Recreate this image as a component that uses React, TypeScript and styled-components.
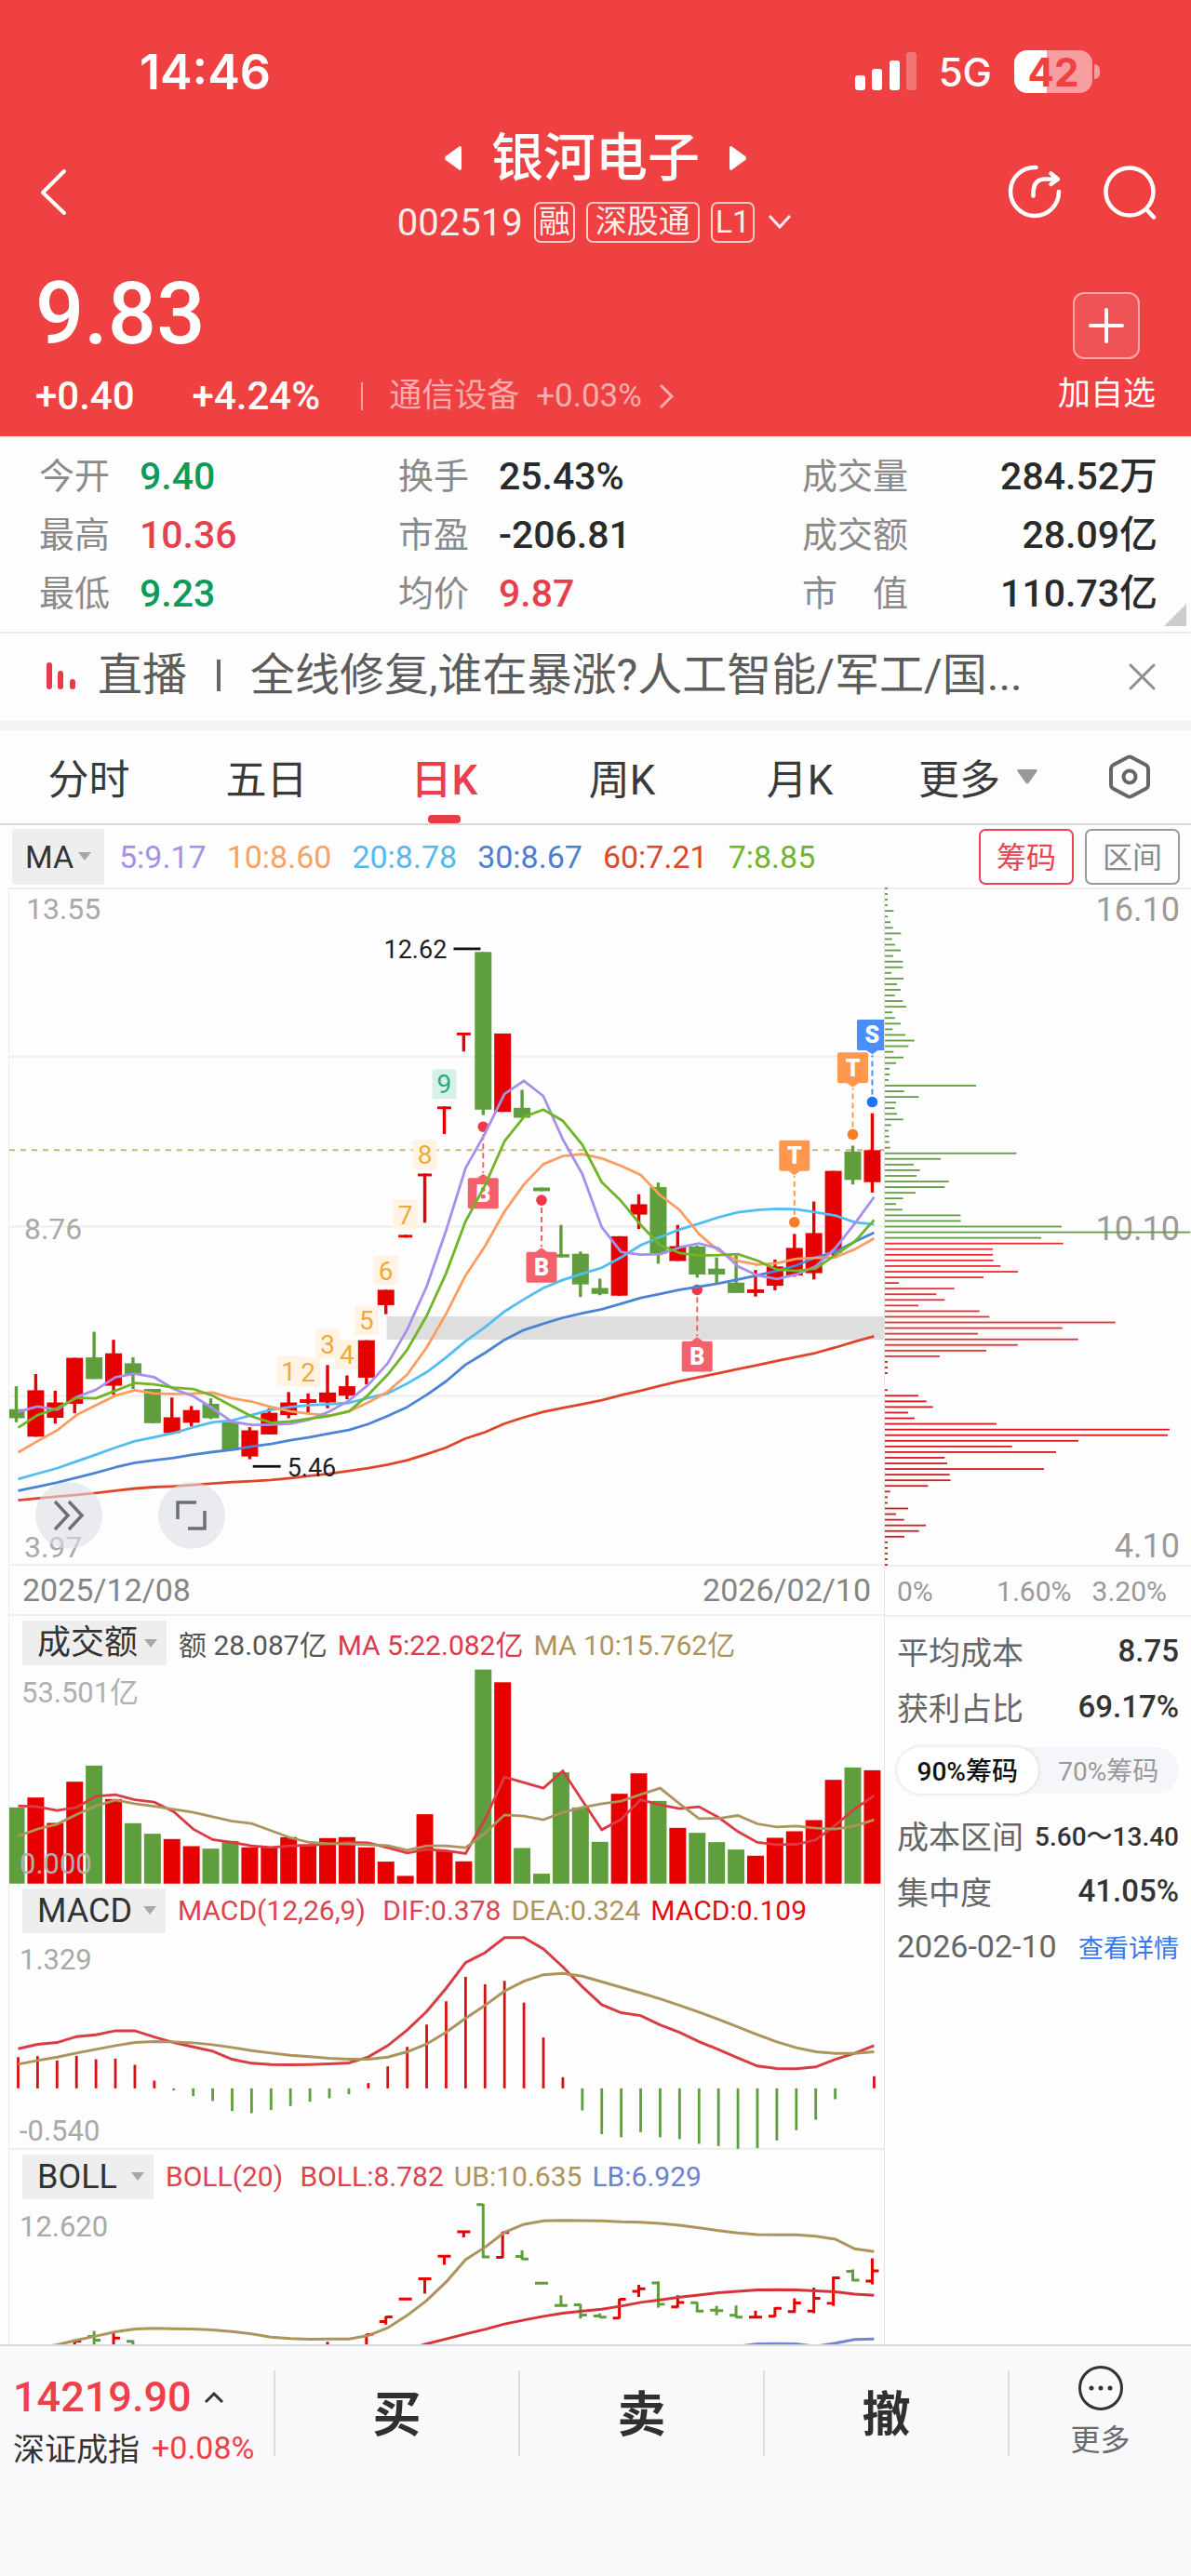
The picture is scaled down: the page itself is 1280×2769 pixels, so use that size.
import React, { useState } from "react";
import styled, { createGlobalStyle } from "styled-components";

const RED = "#e60000";
const GREEN = "#5f9e3c";

const GlobalStyle = createGlobalStyle`
  *, *::before, *::after { box-sizing: border-box; }
  body { margin: 0; background: #fdfdfd; }
  body, button, select {
    font-family: Roboto, "Noto Sans CJK SC", sans-serif;
  }
  button, select {
    margin: 0; padding: 0; border: 0; background: none; color: inherit; cursor: pointer;
  }
  svg { display: block; }
`;

const Page = styled.div`
  display: flex;
  flex-direction: column;
  min-height: 100vh;
  color: #222;
`;

/* ---------- header ---------- */

const Header = styled.header`
  background: #ef4042;
  color: #fff;
`;

const StatusBar = styled.div`
  display: flex;
  justify-content: space-between;
  align-items: center;
  height: 134px;
  padding: 20px 106px 0 150px;
  font-family: Inter, sans-serif;
`;

const Clock = styled.time`
  font-size: 52px;
  font-weight: 600;
`;

const StatusIcons = styled.div`
  display: flex;
  align-items: center;
  gap: 24px;
`;

const Network = styled.span`
  font-size: 42px;
  font-weight: 500;
`;

const Battery = styled.div`
  position: relative;
  display: flex;
  align-items: center;
  justify-content: center;
  width: 84px;
  height: 46px;
  border-radius: 14px;
  background: linear-gradient(to right, #fff 42%, #f79fa0 42%);
  color: #ef4042;
  font-size: 42px;
  font-weight: 700;
  &::after {
    content: "";
    position: absolute;
    left: 86px;
    top: 15px;
    width: 6px;
    height: 16px;
    border-radius: 0 6px 6px 0;
    background: #f79fa0;
  }
`;

const TitleBar = styled.div`
  display: grid;
  grid-template-columns: 1fr auto 1fr;
  align-items: center;
  height: 144px;
  padding: 0 36px;
`;

const IconButton = styled.button`
  display: grid;
  place-items: center;
`;

const BackButton = styled(IconButton)`
  justify-self: start;
`;

const TitleActions = styled.div`
  display: flex;
  justify-content: flex-end;
  gap: 42px;
`;

const TitleCenter = styled.div`
  padding-bottom: 6px;
`;

const TitleLine = styled.div`
  display: flex;
  align-items: center;
  justify-content: center;
  gap: 32px;
  height: 72px;
`;

const StockName = styled.h1`
  margin: 0;
  font-size: 56px;
  font-weight: 500;
  line-height: 72px;
`;

const CodeLine = styled.div`
  display: flex;
  align-items: center;
  justify-content: center;
  gap: 12px;
  height: 66px;
  font-size: 40px;
  opacity: 0.9;
`;

const Tag = styled.span`
  height: 44px;
  padding: 0 3px;
  border: 2px solid rgba(255, 255, 255, 0.8);
  border-radius: 7px;
  font-size: 34px;
  line-height: 38px;
`;

const WideTag = styled(Tag)`
  padding: 0 8px;
`;

const PriceBar = styled.div`
  display: flex;
  justify-content: space-between;
  height: 191px;
  padding: 4px 38px 11px;
`;

const Price = styled.div`
  font-size: 92px;
  font-weight: 500;
  line-height: 112px;
`;

const ChangeLine = styled.div`
  display: flex;
  align-items: center;
  font-size: 42px;
  font-weight: 500;
  line-height: 64px;
`;

const Change = styled.span`
  margin-right: 62px;
  & + & { margin-right: 44px; }
`;

const SectorLink = styled.a`
  display: flex;
  align-items: center;
  gap: 18px;
  color: rgba(255, 255, 255, 0.58);
  font-size: 35px;
  font-weight: 400;
  text-decoration: none;
  &::before {
    content: "";
    width: 2px;
    height: 30px;
    margin-right: 10px;
    background: rgba(255, 255, 255, 0.5);
  }
`;

const AddButton = styled.button`
  display: flex;
  flex-direction: column;
  align-items: center;
  gap: 14px;
  padding-top: 32px;
  font-size: 35px;
  line-height: 48px;
`;

const PlusBox = styled.span`
  display: grid;
  place-items: center;
  width: 72px;
  height: 72px;
  border: 2px solid rgba(255, 255, 255, 0.5);
  border-radius: 12px;
  background: rgba(255, 255, 255, 0.1);
`;

/* ---------- quote figures ---------- */

const Quotes = styled.section`
  position: relative;
  display: grid;
  grid-template-columns: 386fr 434fr 382fr;
  padding: 12px 36px 9px 42px;
  border-bottom: 2px solid #ececee;
`;

const QuoteList = styled.dl`
  margin: 0;
`;

const QuoteRow = styled.div<{ $spread?: boolean }>`
  display: flex;
  justify-content: ${(p) => (p.$spread ? "space-between" : "flex-start")};
  line-height: 63px;
`;

const QuoteName = styled.dt`
  min-width: 108px;
  color: #8a8a8a;
  font-size: 38px;
  white-space: pre;
`;

const QuoteValue = styled.dd<{ $color?: string }>`
  margin: 0;
  color: ${(p) => p.$color ?? "#2a2a2a"};
  font-size: 41px;
  font-weight: 500;
`;

const Corner = styled.i`
  position: absolute;
  right: 5px;
  bottom: 6px;
  border-left: 24px solid transparent;
  border-bottom: 24px solid #ccc;
`;

/* ---------- news ---------- */

const News = styled.section`
  display: flex;
  align-items: center;
  height: 104px;
  padding: 0 38px 0 48px;
  border-bottom: 10px solid #f3f4f6;
  color: #5c5c5c;
  font-size: 48px;
  line-height: 90px;
`;

const NewsBody = styled.div`
  display: flex;
  flex: 1;
  align-items: center;
  padding-bottom: 4px;
`;

const NewsDivider = styled.span`
  width: 4px;
  height: 34px;
  margin: 0 32px;
  background: #666;
`;

const NewsLink = styled.a`
  flex: 1;
  color: inherit;
  text-decoration: none;
  white-space: nowrap;
`;

/* ---------- period tabs ---------- */

const Tabs = styled.nav`
  display: grid;
  grid-template-columns: repeat(5, 191fr) 192fr 133fr;
  height: 102px;
  border-bottom: 2px solid #d8d8d8;
`;

const Tab = styled.button<{ $active?: boolean }>`
  position: relative;
  display: flex;
  align-items: center;
  justify-content: center;
  gap: 18px;
  color: ${(p) => (p.$active ? "#e9404e" : "#3a3a3a")};
  font-size: 44px;
  font-weight: ${(p) => (p.$active ? 500 : 400)};
  &::after {
    content: "";
    position: absolute;
    bottom: 0;
    width: 35px;
    height: 9px;
    border-radius: 4px;
    background: ${(p) => (p.$active ? "#e93a48" : "transparent")};
  }
`;

/* ---------- indicator line ---------- */

const Averages = styled.section`
  display: flex;
  align-items: center;
  gap: 22px;
  height: 67px;
  padding: 0 12px 0 13px;
  font-size: 34px;
`;

const PickerBox = styled.label<{ $compact?: boolean }>`
  position: relative;
  display: flex;
  align-items: center;
  height: ${(p) => (p.$compact ? "60px" : "48px")};
  margin-right: ${(p) => (p.$compact ? "-6px" : "2px")};
  background: #eeeeef;
  border-radius: 2px;
  color: #333;
  &::after {
    content: "";
    position: absolute;
    right: ${(p) => (p.$compact ? "14px" : "10px")};
    border: 7px solid transparent;
    border-top: 9px solid #a8a8a8;
    border-bottom: 0;
    pointer-events: none;
  }
`;

const PickerSelect = styled.select<{ $width: number; $compact?: boolean }>`
  appearance: none;
  width: ${(p) => p.$width}px;
  height: 100%;
  padding-left: ${(p) => (p.$compact ? 14 : 16)}px;
  font-size: ${(p) => (p.$compact ? 34 : 36)}px;
`;

const Tint = styled.span<{ $color: string }>`
  color: ${(p) => p.$color};
`;

const ModeButtons = styled.div`
  display: flex;
  gap: 12px;
  margin-left: auto;
`;

const ModeButton = styled.button<{ $active?: boolean }>`
  width: 102px;
  height: 60px;
  padding-bottom: 4px;
  border: 2px solid ${(p) => (p.$active ? "#ea4452" : "#9a9a9a")};
  border-radius: 7px;
  color: ${(p) => (p.$active ? "#ea4452" : "#8a8a8a")};
  font-size: 32px;
`;

/* ---------- chart area ---------- */

const ChartArea = styled.main`
  display: grid;
  grid-template-columns: 950fr 330fr;
`;

const ChartColumn = styled.div`
  margin-left: 9px;
  border-left: 1px solid #ebebeb;
`;

const ChartBox = styled.div`
  position: relative;
`;

const Plot = styled.svg`
  width: 100%;
  height: auto;
  font-family: Roboto, "Noto Sans CJK SC", sans-serif;
`;

const RoundButton = styled.button<{ $left: number }>`
  position: absolute;
  left: ${(p) => p.$left}px;
  bottom: 18px;
  display: grid;
  place-items: center;
  width: 72px;
  height: 72px;
  border-radius: 50%;
  background: rgba(220, 223, 228, 0.6);
`;

const AxisRow = styled.div`
  display: flex;
  justify-content: space-between;
  align-items: center;
  height: 54px;
  padding: 0 14px;
  border-bottom: 2px solid #efefef;
  color: #858585;
  font-size: 34px;
`;

const PercentRow = styled(AxisRow)`
  justify-content: flex-start;
  gap: 22px;
  padding: 0 26px 0 13px;
  color: #999;
  font-size: 30px;
  & > :first-child { margin-right: auto; }
`;

const PanelHead = styled.div`
  display: flex;
  align-items: center;
  gap: 11px;
  height: 53px;
  padding: 5px 0 0 14px;
  font-size: 30px;
  white-space: pre;
`;

const SideColumn = styled.aside`
  border-left: 1px solid #e4e4e4;
`;

const CostList = styled.div`
  padding: 6px 13px 0 13px;
`;

const CostRow = styled.div`
  display: flex;
  align-items: center;
  justify-content: space-between;
  height: 60px;
  color: #666;
  font-size: 34px;
  white-space: nowrap;
`;

const CostValue = styled.span<{ $small?: boolean }>`
  color: #333;
  font-size: ${(p) => (p.$small ? 28 : 33)}px;
  font-weight: 500;
`;

const DetailLink = styled.a`
  color: #3478f0;
  font-size: 27px;
  text-decoration: none;
`;

const Toggle = styled.div`
  display: grid;
  grid-template-columns: 1fr 1fr;
  height: 50px;
  margin: 14px 0;
  border-radius: 25px;
  background: #f5f6fa;
`;

const ToggleButton = styled.button<{ $active: boolean }>`
  padding-bottom: 2px;
  border-radius: 25px;
  background: ${(p) => (p.$active ? "#fff" : "transparent")};
  box-shadow: ${(p) => (p.$active ? "0 0 4px rgba(0, 0, 0, 0.16)" : "none")};
  color: ${(p) => (p.$active ? "#111" : "#999")};
  font-size: 28px;
  font-weight: ${(p) => (p.$active ? 500 : 400)};
`;

/* ---------- footer ---------- */

const Footer = styled.footer`
  display: grid;
  flex: 1;
  grid-template-columns: 294fr 263fr 263fr 263fr 197fr;
  align-items: start;
  min-height: 248px;
  padding-top: 26px;
  border-top: 2px solid #d9d9db;
  background: #f9f9fb;
`;

const IndexCell = styled.button`
  padding: 2px 0 0 14px;
  text-align: left;
  white-space: nowrap;
`;

const IndexLine = styled.div<{ $big?: boolean }>`
  display: flex;
  align-items: center;
  gap: 13px;
  height: 54px;
  color: ${(p) => (p.$big ? "#ee3f4b" : "#333")};
  font-size: ${(p) => (p.$big ? 45 : 34)}px;
  font-weight: ${(p) => (p.$big ? 500 : 400)};
`;

const TradeButton = styled.button`
  height: 92px;
  padding-bottom: 4px;
  border-left: 2px solid #dcdcde;
  color: #2f3032;
  font-size: 52px;
  font-weight: 700;
`;

const MoreButton = styled.button`
  display: flex;
  flex-direction: column;
  align-items: center;
  height: 92px;
  border-left: 2px solid #dcdcde;
  color: #6a6a6a;
  font-size: 32px;
  line-height: 62px;
  & > svg { flex: none; margin-top: -6px; }
`;

/* ---------- data ---------- */

// Bars are spaced evenly from the left edge of the plot.
const barX = (i: number) => 17.5 + 20.93 * i;

const UP = "r";
const toColor = (c: string) => (c === UP ? RED : GREEN);

// Price plot: level units run 30..1533 down the frame of 729 pixels.
const level = (v: number) => v / 2.063 - 14;

type Candle = [string, number, number, number, number];
// direction, high, body top, body bottom, low
const CANDLES: Candle[] = [
  ["g", 1136, 1187, 1207, 1216], ["r", 1109, 1145, 1248, 1248], ["r", 1146, 1172, 1206, 1219],
  ["r", 1073, 1073, 1175, 1196], ["g", 1015, 1072, 1120, 1120], ["r", 1033, 1063, 1135, 1155],
  ["g", 1072, 1085, 1109, 1142], ["g", 1142, 1142, 1218, 1218], ["r", 1161, 1205, 1240, 1240],
  ["r", 1180, 1189, 1217, 1225], ["g", 1163, 1175, 1207, 1209], ["g", 1216, 1216, 1278, 1280],
  ["r", 1227, 1234, 1292, 1298], ["r", 1185, 1195, 1243, 1243], ["r", 1149, 1172, 1200, 1207],
  ["r", 1152, 1165, 1173, 1194], ["r", 1089, 1150, 1172, 1185], ["r", 1112, 1136, 1157, 1165],
  ["r", 1034, 1034, 1117, 1132], ["r", 922, 922, 956, 976], ["r", 800, 800, 806, 806],
  ["r", 664, 664, 670, 773], ["r", 515, 515, 521, 576], ["r", 351, 351, 357, 393],
  ["g", 172, 172, 522, 534], ["r", 353, 353, 527, 527], ["g", 478, 518, 540, 540],
  ["g", 695, 695, 703, 703], ["g", 778, 843, 850, 850], ["g", 837, 842, 910, 938],
  ["g", 897, 918, 931, 934], ["r", 803, 803, 935, 935], ["r", 710, 732, 755, 787],
  ["g", 684, 694, 842, 864], ["r", 778, 825, 858, 858], ["g", 824, 826, 888, 895],
  ["g", 850, 875, 888, 911], ["g", 846, 906, 929, 929], ["r", 878, 921, 929, 937],
  ["r", 855, 870, 913, 923], ["r", 798, 829, 890, 893], ["r", 726, 796, 885, 899],
  ["r", 658, 658, 840, 850], ["g", 602, 615, 678, 688], ["r", 530, 612, 683, 706],
];

const MA_LINES: { color: string; values: number[] }[] = [
  { color: "#e0452c", values: [1389, 1385, 1381, 1377, 1373, 1368, 1363, 1360, 1358, 1355, 1352, 1349, 1347, 1344, 1340, 1335, 1330, 1324, 1318, 1310, 1300, 1287, 1272, 1252, 1238, 1219, 1205, 1193, 1184, 1176, 1167, 1156, 1146, 1135, 1125, 1116, 1107, 1098, 1089, 1080, 1071, 1062, 1050, 1037, 1025] },
  { color: "#4c83d6", values: [1368, 1359, 1350, 1339, 1328, 1316, 1306, 1300, 1295, 1288, 1282, 1277, 1270, 1264, 1256, 1249, 1241, 1233, 1220, 1202, 1182, 1155, 1125, 1088, 1062, 1033, 1011, 997, 984, 974, 965, 953, 940, 931, 922, 915, 908, 899, 890, 880, 868, 850, 838, 815, 795] },
  { color: "#52bdf0", values: [1342, 1330, 1318, 1303, 1288, 1272, 1258, 1249, 1240, 1227, 1216, 1212, 1200, 1188, 1182, 1178, 1176, 1173, 1162, 1152, 1130, 1105, 1072, 1036, 1005, 970, 943, 918, 900, 886, 873, 850, 823, 805, 788, 775, 761, 750, 745, 742, 743, 750, 757, 772, 777] },
  { color: "#fa9d60", values: [1283, 1258, 1234, 1200, 1178, 1157, 1145, 1152, 1153, 1152, 1150, 1163, 1170, 1182, 1192, 1197, 1201, 1192, 1172, 1148, 1110, 1050, 975, 890, 825, 748, 688, 643, 625, 621, 630, 647, 667, 712, 745, 798, 835, 858, 866, 863, 853, 851, 850, 832, 808] },
  { color: "#a790ea", values: [1193, 1181, 1188, 1160, 1144, 1116, 1108, 1116, 1142, 1158, 1185, 1215, 1222, 1221, 1219, 1210, 1192, 1168, 1133, 1085, 1010, 915, 790, 652, 575, 487, 458, 492, 588, 665, 783, 838, 844, 843, 828, 819, 830, 870, 890, 898, 888, 870, 830, 775, 716] },
  { color: "#6fb526", values: [1228, 1200, 1185, 1162, 1163, 1146, 1129, 1132, 1139, 1142, 1157, 1180, 1203, 1217, 1214, 1208, 1202, 1192, 1155, 1110, 1055, 980, 885, 770, 690, 592, 538, 522, 547, 600, 683, 725, 778, 823, 840, 846, 845, 843, 857, 877, 880, 875, 845, 815, 767] },
];

// step count, bar index, vertical centre
const STEPS: [string, number, number][] = [
  ["1", 14, 1102], ["2", 15, 1105], ["3", 16, 1042], ["4", 17, 1066], ["5", 18, 990],
  ["6", 19, 879], ["7", 20, 755], ["8", 21, 622], ["9", 22, 465],
];

type Trade = { kind: "B" | "T" | "S"; bar: number; flag: number; dot: number };
const TRADES: Trade[] = [
  { kind: "B", bar: 24, flag: 708, dot: 560 },
  { kind: "B", bar: 27, flag: 872, dot: 723 },
  { kind: "B", bar: 35, flag: 1070, dot: 922 },
  { kind: "T", bar: 40, flag: 624, dot: 772 },
  { kind: "T", bar: 43, flag: 429, dot: 577 },
  { kind: "S", bar: 44, flag: 356, dot: 505 },
];
const TRADE_COLORS = {
  B: ["#f5616b", "#ee3a48"],
  T: ["#ff984f", "#fb7c28"],
  S: ["#4b8ef9", "#1e74f8"],
};

const VOLUMES: [string, number][] = [
  ["g", 792], ["r", 760], ["r", 842], ["r", 709], ["g", 657], ["r", 765], ["g", 843], ["g", 877],
  ["r", 894], ["r", 917], ["g", 925], ["g", 900], ["r", 921], ["r", 920], ["r", 888], ["r", 912],
  ["r", 891], ["r", 888], ["r", 921], ["r", 967], ["r", 1013], ["r", 814], ["r", 932], ["r", 966],
  ["g", 347], ["r", 388], ["g", 923], ["g", 1006], ["g", 679], ["g", 792], ["g", 903], ["r", 748],
  ["r", 682], ["g", 771], ["r", 858], ["g", 874], ["g", 904], ["g", 928], ["r", 948], ["r", 890],
  ["r", 869], ["r", 833], ["r", 703], ["g", 663], ["r", 672],
];
const VOLUME_MA5 = [787, 790, 802, 792, 756, 751, 767, 775, 806, 862, 896, 905, 916, 921, 916, 914, 909, 905, 906, 922, 939, 927, 932, 941, 830, 694, 712, 730, 674, 770, 864, 830, 767, 784, 796, 790, 824, 870, 905, 912, 911, 897, 850, 797, 754];
const VOLUME_MA10 = [884, 862, 846, 815, 787, 768, 780, 788, 798, 808, 822, 836, 844, 867, 890, 905, 909, 910, 912, 915, 930, 916, 916, 922, 875, 816, 820, 832, 808, 792, 780, 772, 750, 730, 780, 828, 827, 818, 845, 855, 852, 859, 862, 852, 832];

const DIF = [550, 536, 530, 511, 505, 492, 492, 512, 530, 544, 558, 584, 597, 601, 602, 601, 599, 596, 577, 540, 490, 430, 355, 272, 240, 191, 191, 228, 286, 350, 408, 434, 443, 473, 497, 527, 553, 580, 606, 614, 615, 609, 584, 565, 540];
const DEA = [600, 588, 577, 564, 552, 540, 530, 527, 528, 531, 537, 546, 556, 564, 571, 576, 581, 584, 584, 577, 560, 535, 497, 452, 410, 364, 332, 311, 307, 316, 334, 352, 370, 389, 410, 432, 455, 480, 505, 528, 547, 560, 565, 565, 560];
const MACD_BARS = [577, 574, 588, 573, 584, 582, 602, 653, 685, 703, 719, 751, 758, 748, 735, 721, 710, 697, 661, 607, 544, 472, 397, 318, 342, 331, 401, 514, 642, 749, 826, 836, 819, 836, 842, 857, 864, 873, 871, 846, 813, 779, 713, 678, 639];

const BOLL_UPPER = [1530, 1515, 1505, 1490, 1477, 1463, 1454, 1452, 1453, 1454, 1457, 1462, 1470, 1480, 1485, 1487, 1486, 1486, 1475, 1450, 1410, 1362, 1302, 1230, 1190, 1142, 1116, 1105, 1103, 1104, 1105, 1108, 1109, 1113, 1119, 1127, 1136, 1144, 1149, 1150, 1150, 1154, 1164, 1195, 1204];
const BOLL_MIDDLE = [1520, 1502, 1486, 1470, 1455, 1438, 1425, 1413, 1403, 1396, 1390, 1380, 1368, 1360, 1351, 1344, 1337, 1332, 1328, 1327, 1328, 1331, 1334, 1341, 1345];
const BOLL_LOWER = [1510, 1502, 1501, 1502, 1510, 1500, 1488, 1486];
// bar index, direction, high, low, open, close
const BOLL_BARS: [number, string, number, number, number, number][] = [
  [3, "r", 1488, 1510, 1510, 1493], [4, "g", 1460, 1510, 1478, 1490], [5, "r", 1466, 1510, 1510, 1483],
  [6, "g", 1490, 1510, 1494, 1510], [16, "r", 1495, 1510, 1510, 1510], [18, "r", 1470, 1510, 1510, 1472],
  [19, "r", 1413, 1440, 1430, 1415], [20, "r", 1354, 1359, 1357, 1357], [21, "r", 1290, 1340, 1292, 1292],
  [22, "r", 1217, 1247, 1219, 1219], [23, "r", 1138, 1158, 1140, 1140], [24, "g", 1050, 1225, 1052, 1221],
  [25, "r", 1140, 1225, 1223, 1142], [26, "g", 1200, 1230, 1220, 1228], [27, "g", 1304, 1308, 1306, 1306],
  [28, "g", 1345, 1380, 1378, 1378], [29, "g", 1373, 1420, 1376, 1409], [30, "g", 1404, 1418, 1412, 1416],
  [31, "r", 1356, 1420, 1419, 1358], [32, "r", 1311, 1350, 1332, 1324], [33, "g", 1300, 1385, 1305, 1374],
  [34, "r", 1345, 1385, 1383, 1368], [35, "g", 1367, 1400, 1369, 1396], [36, "g", 1380, 1410, 1393, 1395],
  [37, "g", 1378, 1418, 1410, 1416], [38, "r", 1395, 1420, 1416, 1416], [39, "r", 1384, 1415, 1413, 1387],
  [40, "r", 1355, 1402, 1398, 1370], [41, "r", 1320, 1403, 1396, 1355], [42, "r", 1285, 1380, 1371, 1289],
  [43, "g", 1262, 1300, 1268, 1296], [44, "r", 1226, 1310, 1299, 1266],
];

// Chip distribution from the top price down, one entry per price step; 0 is an empty step.
const CHIPS = [
  9, 9, 9, 9, 28, 9, 18, 26, 52, 23, 33, 51, 27, 58, 58, 21, 60, 39, 51, 32, 58, 69, 24, 32, 51, 25,
  66, 95, 76, 28, 60, 36, 15, 16, 12, 294, 62, 109, 36, 32, 39, 59, 20, 12, 14, 14, 17, 424, 180, 93,
  113, 102, 206, 193, 99, 58, 36, 56, 244, 245, 570, 985, 504, 575, 348, 348, 350, 373, 429, 318, 45,
  224, 166, 193, 108, 305, 337, 743, 572, 300, 623, 428, 327, 177, 9, 9, 9, 0, 0, 9, 108, 134, 155, 75,
  96, 360, 918, 912, 624, 410, 552, 193, 201, 513, 209, 212, 139, 17, 9, 9, 75, 36, 62, 132, 110, 63,
  9, 9, 9, 9, 9,
];
const CHIPS_UP_FROM = 63;

const linePath = (values: number[], y: (v: number) => number, from = 0) =>
  values.map((v, i) => `${i ? "L" : "M"}${(barX(i + from) + 2).toFixed(1)} ${y(v).toFixed(1)}`).join("");

/* ---------- plots ---------- */

function TradeFlag({ kind, bar, flag, dot }: Trade) {
  const x = barX(bar);
  const y = level(flag);
  const d = level(dot);
  const side = flag > dot ? -1 : 1;
  const [fill, dotFill] = TRADE_COLORS[kind];
  return (
    <g>
      <line x1={x} x2={x} y1={d - side * 8} y2={y + side * 22} stroke={fill} strokeWidth={2} strokeDasharray="6 4" />
      <circle cx={x} cy={d} r={5.8} fill={dotFill} />
      <rect x={x - 16.5} y={y - 16.5} width={33} height={33} rx={2} fill={fill} />
      <path d={`M${x - 7} ${y + side * 16}L${x} ${y + side * 21}L${x + 7} ${y + side * 16}Z`} fill={fill} />
      <text x={x} y={y + 9} fontSize={25} fontWeight={900} fill="#fff" textAnchor="middle">{kind}</text>
    </g>
  );
}

function PricePlot() {
  return (
    <Plot viewBox="10 0 941 730" role="img" aria-label="日K">
      <g stroke="#ededed" strokeWidth={2}>
        {[1, 182, 365, 547, 729].map((y) => <line key={y} x1={10} x2={951} y1={y} y2={y} />)}
      </g>
      <rect x={416} y={level(981)} width={535} height={25} fill="#dedede" />
      <line x1={10} x2={951} y1={level(612)} y2={level(612)} stroke="#cbb277" strokeWidth={2} strokeDasharray="6 6" />
      <g fill="#a9a9a9" fontSize={32}>
        <text x={28} y={34}>13.55</text>
        <text x={26} y={378}>8.76</text>
        <text x={26} y={721}>3.97</text>
      </g>
      {STEPS.map(([label, bar, y]) => (
        <g key={label}>
          <rect x={barX(bar) - 13} y={level(y) - 16} width={26} height={32} rx={2} fill={label === "9" ? "#d6f2e8" : "#fff4e4"} />
          <text x={barX(bar)} y={level(y) + 10} fontSize={28} textAnchor="middle" fill={label === "9" ? "#27a97c" : "#f0a83a"}>
            {label}
          </text>
        </g>
      ))}
      {CANDLES.map(([dir, high, top, bottom, low], i) => {
        const half = i >= 20 && i <= 23 ? 7.5 : 9;
        return (
          <g key={i} fill={toColor(dir)}>
            <rect x={barX(i) - 1.7} y={level(high)} width={3.4} height={level(low) - level(high)} />
            <rect x={barX(i) - half} y={level(top)} width={half * 2} height={level(bottom) - level(top)} />
          </g>
        );
      })}
      {TRADES.map((t) => <TradeFlag key={t.bar} {...t} />)}
      {MA_LINES.map(({ color, values }) => (
        <path key={color} d={linePath(values, level)} fill="none" stroke={color} strokeWidth={2.8} strokeLinejoin="round" />
      ))}
      <g stroke="#111" strokeWidth={2.8}>
        <line x1={488} x2={517} y1={level(165)} y2={level(165)} />
        <line x1={272} x2={302} y1={level(1314)} y2={level(1314)} />
      </g>
      <g fill="#1c1c1c" fontSize={27}>
        <text x={413} y={76}>12.62</text>
        <text x={309} y={634}>5.46</text>
      </g>
    </Plot>
  );
}

function ChipPlot() {
  return (
    <Plot viewBox="951 0 329 730" role="img" aria-label="筹码">
      <line x1={951} x2={1280} y1={1} y2={1} stroke="#ededed" strokeWidth={2} />
      <line x1={951} x2={1280} y1={729} y2={729} stroke="#ededed" strokeWidth={2} />
      <g fill="#9b9b9b" fontSize={36} textAnchor="end">
        <text x={1268} y={36}>16.10</text>
        <text x={1268} y={379}>10.10</text>
        <text x={1268} y={720}>4.10</text>
      </g>
      {CHIPS.map((length, i) => (
        <rect
          key={i}
          x={951}
          y={i * 6.06}
          width={length / 3}
          height={1.8}
          fill={i < CHIPS_UP_FROM ? "#639b45" : i < 84 ? "#e92f36" : "#d31920"}
        />
      ))}
    </Plot>
  );
}

function VolumePlot() {
  const y = (v: number) => v / 3 - 111;
  return (
    <Plot viewBox="10 0 941 235" role="img" aria-label="成交额">
      {VOLUMES.map(([dir, v], i) => (
        <rect key={i} x={barX(i) - 9} y={y(v)} width={18} height={235 - y(v)} fill={toColor(dir)} />
      ))}
      <path d={linePath(VOLUME_MA5, y)} fill="none" stroke="#dc3a45" strokeWidth={2.8} />
      <path d={linePath(VOLUME_MA10, y)} fill="none" stroke="#ad945c" strokeWidth={2.8} />
      <g fill="#b0b0b0" fontSize={31}>
        <text x={23} y={40}>53.501亿</text>
        <text x={21} y={224}>0.000</text>
      </g>
    </Plot>
  );
}

function MacdPlot() {
  const y = (v: number) => v / 3 - 59;
  return (
    <Plot viewBox="10 0 941 233" role="img" aria-label="MACD">
      <line x1={10} x2={951} y1={232} y2={232} stroke="#ededed" strokeWidth={2} />
      {MACD_BARS.map((v, i) => (
        <line key={i} x1={barX(i) + 2} x2={barX(i) + 2} y1={y(678)} y2={y(v)} stroke={v < 678 ? "#d60f12" : GREEN} strokeWidth={2.8} />
      ))}
      <path d={linePath(DIF, y)} fill="none" stroke="#d83d46" strokeWidth={3} />
      <path d={linePath(DEA, y)} fill="none" stroke="#ad945c" strokeWidth={3} />
      <g fill="#a9a9a9" fontSize={31}>
        <text x={21} y={39}>1.329</text>
        <text x={21} y={223}>-0.540</text>
      </g>
    </Plot>
  );
}

function BollPlot() {
  const y = (v: number) => v / 3 - 345;
  return (
    <Plot viewBox="10 0 941 156" role="img" aria-label="BOLL">
      {BOLL_BARS.map(([i, dir, high, low, open, close]) => (
        <path
          key={i}
          d={`M${barX(i)} ${y(high)}V${y(low)}M${barX(i) - 7} ${y(open)}H${barX(i)}M${barX(i)} ${y(close)}H${barX(i) + 7}`}
          stroke={toColor(dir)}
          strokeWidth={3}
        />
      ))}
      <path d={linePath(BOLL_UPPER, y)} fill="none" stroke="#ad945c" strokeWidth={3} />
      <path d={linePath(BOLL_MIDDLE, y, 20)} fill="none" stroke="#d6333d" strokeWidth={3} />
      <path d={linePath(BOLL_LOWER, y, 37)} fill="none" stroke="#6f86d6" strokeWidth={3} />
      <text x={21} y={40} fill="#a9a9a9" fontSize={31}>12.620</text>
    </Plot>
  );
}

/* ---------- parts ---------- */

function Picker({ label, options, width, compact }: { label: string; options: string[]; width: number; compact?: boolean }) {
  return (
    <PickerBox $compact={compact}>
      <PickerSelect $width={width} $compact={compact} aria-label={label}>
        {options.map((o) => <option key={o}>{o}</option>)}
      </PickerSelect>
    </PickerBox>
  );
}

function Quote({ rows, spread }: { rows: [string, string, string?][]; spread?: boolean }) {
  return (
    <QuoteList>
      {rows.map(([name, value, color]) => (
        <QuoteRow key={name} $spread={spread}>
          <QuoteName>{name}</QuoteName>
          <QuoteValue $color={color}>{value}</QuoteValue>
        </QuoteRow>
      ))}
    </QuoteList>
  );
}

const QUOTE_GREEN = "#0e9a59";
const QUOTE_RED = "#e83f4c";
const PERIODS = ["分时", "五日", "日K", "周K", "月K"];

export default function App() {
  const [period, setPeriod] = useState("日K");
  const [share, setShare] = useState("90%筹码");

  return (
    <Page>
      <GlobalStyle />
      <Header>
        <StatusBar>
          <Clock>14:46</Clock>
          <StatusIcons>
            <svg width="66" height="42" viewBox="0 0 66 42" fill="#fff">
              <rect x="0" y="25" width="11" height="16" rx="3" />
              <rect x="18" y="18" width="11" height="23" rx="3" />
              <rect x="37" y="9" width="11" height="32" rx="3" />
              <rect x="55" y="0" width="11" height="41" rx="3" opacity="0.28" />
            </svg>
            <Network>5G</Network>
            <Battery>42</Battery>
          </StatusIcons>
        </StatusBar>

        <TitleBar>
          <BackButton aria-label="返回">
            <svg width="44" height="56" viewBox="0 0 44 56" fill="none" stroke="#fff" strokeWidth="4" strokeLinecap="round" strokeLinejoin="round">
              <path d="M33 6L10 29L33 51" />
            </svg>
          </BackButton>
          <TitleCenter>
            <TitleLine>
              <IconButton aria-label="上一只">
                <svg width="18" height="28" viewBox="0 0 18 28" fill="#fff"><path d="M16 1Q18 1 18 3V25Q18 27 16 27L1 16Q-1 14 1 12Z" /></svg>
              </IconButton>
              <StockName>银河电子</StockName>
              <IconButton aria-label="下一只">
                <svg width="18" height="28" viewBox="0 0 18 28" fill="#fff"><path d="M2 1Q0 1 0 3V25Q0 27 2 27L17 16Q19 14 17 12Z" /></svg>
              </IconButton>
            </TitleLine>
            <CodeLine>
              <span>002519</span>
              <Tag>融</Tag>
              <WideTag>深股通</WideTag>
              <Tag>L1</Tag>
              <IconButton aria-label="展开">
                <svg width="30" height="20" viewBox="0 0 30 20" fill="none" stroke="#fff" strokeWidth="3"><path d="M4 3L15 15L26 3" /></svg>
              </IconButton>
            </CodeLine>
          </TitleCenter>
          <TitleActions>
            <IconButton aria-label="分享">
              <svg width="60" height="60" viewBox="0 0 60 60" fill="none" stroke="#fff" strokeWidth="4.5" strokeLinecap="round" strokeLinejoin="round">
                <path d="M31.5 4A26 26 0 1 0 56 30" />
                <path d="M28.5 34.5V30Q29 17 41 16.5H53M47.5 10.5L55 16.5L47.5 22" />
              </svg>
            </IconButton>
            <IconButton aria-label="搜索">
              <svg width="60" height="60" viewBox="0 0 60 60" fill="none" stroke="#fff" strokeWidth="4.5" strokeLinecap="round">
                <circle cx="30" cy="30" r="25.5" />
                <path d="M48 49L56 57.5" />
              </svg>
            </IconButton>
          </TitleActions>
        </TitleBar>

        <PriceBar>
          <div>
            <Price>9.83</Price>
            <ChangeLine>
              <Change>+0.40</Change>
              <Change>+4.24%</Change>
              <SectorLink href="#sector">
                <span>通信设备</span>
                <span>+0.03%</span>
                <svg width="16" height="28" viewBox="0 0 16 28" fill="none" stroke="currentColor" strokeWidth="3"><path d="M2 2L14 14L2 26" /></svg>
              </SectorLink>
            </ChangeLine>
          </div>
          <AddButton>
            <PlusBox>
              <svg width="38" height="38" viewBox="0 0 38 38" stroke="#fff" strokeWidth="4" strokeLinecap="round"><path d="M19 2V36M2 19H36" /></svg>
            </PlusBox>
            加自选
          </AddButton>
        </PriceBar>
      </Header>

      <Quotes>
        <Quote rows={[["今开", "9.40", QUOTE_GREEN], ["最高", "10.36", QUOTE_RED], ["最低", "9.23", QUOTE_GREEN]]} />
        <Quote rows={[["换手", "25.43%"], ["市盈", "-206.81"], ["均价", "9.87", QUOTE_RED]]} />
        <Quote spread rows={[["成交量", "284.52万"], ["成交额", "28.09亿"], ["市\u3000值", "110.73亿"]]} />
        <Corner />
      </Quotes>

      <News>
        <svg width="57" height="34" viewBox="0 0 57 34" fill="#ea3b49">
          <rect x="2" y="1" width="6" height="29" rx="3" />
          <rect x="14" y="10" width="6" height="20" rx="3" />
          <rect x="27" y="19" width="6" height="11" rx="3" />
        </svg>
        <NewsBody>
          直播
          <NewsDivider />
          <NewsLink href="#live">全线修复,谁在暴涨?人工智能/军工/国...</NewsLink>
        </NewsBody>
        <IconButton aria-label="关闭">
          <svg width="30" height="30" viewBox="0 0 30 30" stroke="#8f8f8f" strokeWidth="3" strokeLinecap="round"><path d="M3 2L28 27M28 2L3 27" /></svg>
        </IconButton>
      </News>

      <Tabs>
        {PERIODS.map((p) => (
          <Tab key={p} $active={p === period} aria-pressed={p === period} onClick={() => setPeriod(p)}>{p}</Tab>
        ))}
        <Tab>
          更多
          <svg width="22" height="16" viewBox="0 0 22 16" fill="#999"><path d="M2 0H20Q23 0 21 3L13 14Q11 17 9 14L1 3Q-1 0 2 0Z" /></svg>
        </Tab>
        <Tab aria-label="设置">
          <svg width="46" height="50" viewBox="0 0 46 50" fill="none" stroke="#666" strokeWidth="4" strokeLinejoin="round">
            <path d="M21 4Q23 3 25 4L41 12.5Q43 14 43 16V34Q43 36 41 37.5L25 46Q23 47 21 46L5 37.5Q3 36 3 34V16Q3 14 5 12.5Z" />
            <circle cx="23" cy="25" r="6.5" />
          </svg>
        </Tab>
      </Tabs>

      <Averages>
        <Picker compact label="主图指标" options={["MA", "SAR"]} width={99} />
        <Tint $color="#a592e6">5:9.17</Tint>
        <Tint $color="#f7a265">10:8.60</Tint>
        <Tint $color="#55b9ec">20:8.78</Tint>
        <Tint $color="#4b7fd2">30:8.67</Tint>
        <Tint $color="#d9492f">60:7.21</Tint>
        <Tint $color="#71b52f">7:8.85</Tint>
        <ModeButtons>
          <ModeButton $active>筹码</ModeButton>
          <ModeButton>区间</ModeButton>
        </ModeButtons>
      </Averages>

      <ChartArea>
        <ChartColumn>
          <ChartBox>
            <PricePlot />
            <RoundButton $left={28} aria-label="快进">
              <svg width="36" height="34" viewBox="0 0 36 34" fill="none" stroke="#6d7074" strokeWidth="3.5"><path d="M3 2L17 17L3 32M18 2L32 17L18 32" /></svg>
            </RoundButton>
            <RoundButton $left={160} aria-label="全屏">
              <svg width="36" height="34" viewBox="0 0 36 34" fill="none" stroke="#6d7074" strokeWidth="3.5"><path d="M3 21V3H23M14 31H32V12" /></svg>
            </RoundButton>
          </ChartBox>
          <AxisRow><span>2025/12/08</span><span>2026/02/10</span></AxisRow>
          <PanelHead>
            <Picker label="副图一" options={["成交额", "成交量"]} width={155} />
            <Tint $color="#555">额 28.087亿</Tint>
            <Tint $color="#dc3a4a">MA 5:22.082亿</Tint>
            <Tint $color="#ad945c">MA 10:15.762亿</Tint>
          </PanelHead>
          <VolumePlot />
          <PanelHead>
            <Picker label="副图二" options={["MACD", "KDJ"]} width={154} />
            <Tint $color="#dc4450">MACD(12,26,9) </Tint>
            <Tint $color="#dc4450">DIF:0.378</Tint>
            <Tint $color="#ad945c">DEA:0.324</Tint>
            <Tint $color="#e01010">MACD:0.109</Tint>
          </PanelHead>
          <MacdPlot />
          <PanelHead>
            <Picker label="副图三" options={["BOLL", "RSI"]} width={141} />
            <Tint $color="#dc4450">BOLL(20) </Tint>
            <Tint $color="#dc4450">BOLL:8.782</Tint>
            <Tint $color="#ad945c">UB:10.635</Tint>
            <Tint $color="#6b82d4">LB:6.929</Tint>
          </PanelHead>
          <BollPlot />
        </ChartColumn>

        <SideColumn>
          <ChipPlot />
          <PercentRow><span>0%</span><span>1.60%</span><span>3.20%</span></PercentRow>
          <CostList>
            <CostRow>平均成本<CostValue>8.75</CostValue></CostRow>
            <CostRow>获利占比<CostValue>69.17%</CostValue></CostRow>
            <Toggle>
              {["90%筹码", "70%筹码"].map((s) => (
                <ToggleButton key={s} $active={s === share} aria-pressed={s === share} onClick={() => setShare(s)}>{s}</ToggleButton>
              ))}
            </Toggle>
            <CostRow>成本区间<CostValue $small>5.60～13.40</CostValue></CostRow>
            <CostRow>集中度<CostValue>41.05%</CostValue></CostRow>
            <CostRow>2026-02-10<DetailLink href="#detail">查看详情</DetailLink></CostRow>
          </CostList>
        </SideColumn>
      </ChartArea>

      <Footer>
        <IndexCell>
          <IndexLine $big>
            14219.90
            <svg width="22" height="14" viewBox="0 0 22 14" fill="none" stroke="#333" strokeWidth="3"><path d="M2 12L11 3L20 12" /></svg>
          </IndexLine>
          <IndexLine>深证成指<Tint $color="#ee3f4b">+0.08%</Tint></IndexLine>
        </IndexCell>
        <TradeButton>买</TradeButton>
        <TradeButton>卖</TradeButton>
        <TradeButton>撤</TradeButton>
        <MoreButton>
          <svg width="50" height="50" viewBox="0 0 50 50" fill="none" stroke="#333" strokeWidth="3">
            <circle cx="25" cy="25" r="22.5" />
            <g fill="#333" stroke="none"><circle cx="15" cy="25" r="2.5" /><circle cx="25" cy="25" r="2.5" /><circle cx="35" cy="25" r="2.5" /></g>
          </svg>
          更多
        </MoreButton>
      </Footer>
    </Page>
  );
}
